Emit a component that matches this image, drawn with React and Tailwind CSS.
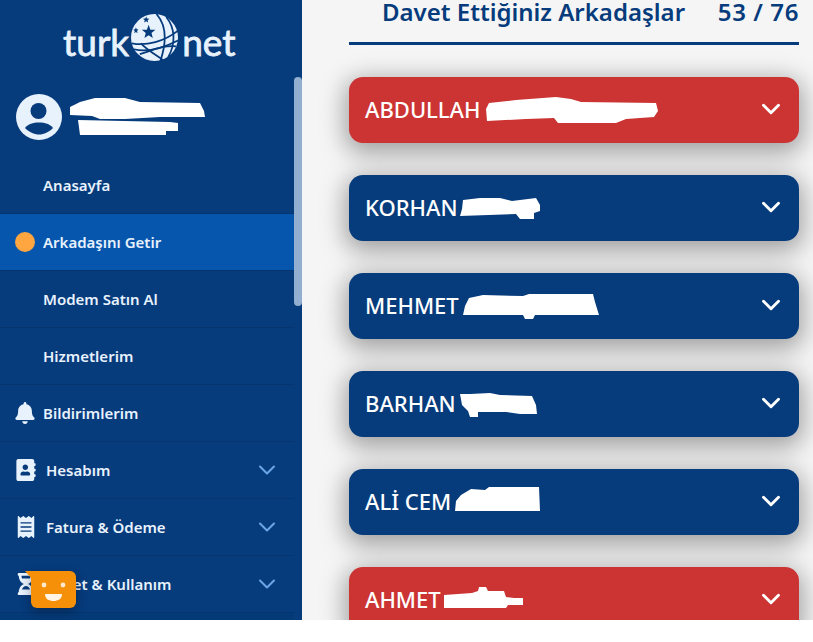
import { ChevronDown } from 'lucide-react'
import { FaBell, FaAddressBook, FaReceipt, FaHourglassHalf } from 'react-icons/fa'

const navRows = [
  { label: 'Anasayfa' },
  { label: 'Arkadaşını Getir', dot: true, active: true },
  { label: 'Modem Satın Al' },
  { label: 'Hizmetlerim' },
  { label: 'Bildirimlerim', icon: FaBell, iconClass: 'text-[22px] ml-[14px] w-[22px]', gap: 'ml-[7px]' },
  { label: 'Hesabım', icon: FaAddressBook, iconClass: 'text-[22px] ml-[16px] w-[20px]', gap: 'ml-[10px]', more: true },
  { label: 'Fatura & Ödeme', icon: FaReceipt, iconClass: 'text-[22px] ml-[17px] w-[18px]', gap: 'ml-[11px]', more: true },
  { label: 'Paket & Kullanım', icon: FaHourglassHalf, iconClass: 'text-[22px] ml-[17px] w-[18px]', gap: 'ml-[11px]', more: true }
]

const friends = [
  { name: 'ABDULLAH', red: true, blob: 'M3 6 L30 3 L70 0 L85 2 L95 5 L170 6 L172 14 L168 20 L140 22 L130 26 L72 26 L68 21 L40 22 L1 24 L0 12 Z', w: 172, h: 27, place: 'ml-[6px]' },
  { name: 'KORHAN', blob: 'M3 3 L20 1 L40 1 L52 4 L76 1 L80 8 L80 14 L74 16 L74 22 L60 22 L56 17 L0 19 L2 12 Z', w: 82, h: 23, place: 'ml-[2px]' },
  { name: 'MEHMET', blob: 'M6 4 L20 1 L60 2 L66 0 L130 0 L132 8 L136 21 L72 21 L70 25 L62 25 L60 21 L0 21 L2 12 Z', w: 137, h: 25, place: 'ml-[4px]' },
  { name: 'BARHAN', blob: 'M0 1 L10 1 L30 0 L40 2 L72 3 L76 12 L77 21 L60 21 L46 19 L18 19 L18 24 L10 24 L8 18 L2 12 Z', w: 77, h: 24, place: 'ml-[4px] mt-[2px]' },
  { name: 'ALİ CEM', blob: 'M6 8 L16 2 L30 3 L34 0 L84 0 L85 24 L0 24 L1 14 Z', w: 85, h: 24, place: 'ml-[4px] -mt-[6px]' },
  { name: 'AHMET', red: true, blob: 'M0 8 L28 6 L34 4 L35 0 L42 0 L44 4 L60 4 L62 10 L70 11 L79 11 L79 18 L64 18 L62 21 L0 21 Z', w: 79, h: 21, place: 'ml-[3px] -mt-[6px]' }
]

function GlobeLogo() {
  return (
    <svg viewBox="0 0 48 48" className="w-[47px] h-[47px] shrink-0">
      <circle cx="24" cy="24" r="24" fill="#e8f2fd" />
      <g fill="none" stroke="#063b7c" strokeWidth="1.8">
        <path d="M26 0 C35 10 38 24 30 48" />
        <path d="M36 3 C45 14 46 30 38 44" />
        <path d="M1 30 C16 33 34 28 48 17" />
        <path d="M3 36 C18 40 34 34 48 27" />
        <path d="M9 41 C22 37 32 32 46 33" />
        <path d="M10 30 C18 38 26 42 34 48" />
      </g>
      <path d="M18 11 L19.8 16 L25 16.2 L20.9 19.4 L22.3 24.5 L18 21.6 L13.7 24.5 L15.1 19.4 L11 16.2 L16.2 16 Z" fill="#063b7c" />
      <path d="M15.5 2.5 L16.4 4.6 L18.8 4.8 L17 6.3 L17.6 8.6 L15.5 7.4 L13.4 8.6 L14 6.3 L12.2 4.8 L14.6 4.6 Z" fill="#063b7c" />
      <path d="M5 13.5 L5.8 15.6 L7.6 15.8 L6.2 17.3 L6.7 19.6 L5 18.4 L3.3 19.6 L3.8 17.3 L2.4 15.8 L4.2 15.6 Z" fill="#063b7c" />
    </svg>
  )
}

function Avatar() {
  return (
    <svg viewBox="0 0 46 46" className="w-[46px] h-[46px] shrink-0">
      <circle cx="23" cy="23" r="23" fill="#e8f2fd" />
      <circle cx="22.5" cy="17" r="8" fill="#063b7c" />
      <path d="M9 34 C12 30 17 28.5 23 28.5 C29 28.5 34 30 37 34 C33 38 28 40.5 23 40.5 C18 40.5 13 38 9 34 Z" fill="#063b7c" />
    </svg>
  )
}

function NavRow({ row }) {
  const Icon = row.icon
  return (
    <div className={`h-[57px] shrink-0 flex items-center border-b border-[#05346e] ${row.active ? 'bg-[#0756ae]' : ''}`}>
      {row.dot && <span className="w-[20px] h-[20px] ml-[15px] rounded-full bg-[#ffa640]" />}
      {Icon && <Icon className={`${row.iconClass} text-[#e8f2fd]`} />}
      <span className={`text-[15px] font-semibold text-[#e8f2fd] ${row.dot ? 'ml-[8px]' : Icon ? row.gap : 'ml-[43px]'}`}>{row.label}</span>
      {row.more && <ChevronDown size={28} strokeWidth={1.8} className="ml-auto mr-[13px] text-[#6aa5e8]" />}
    </div>
  )
}

function FriendCard({ friend }) {
  return (
    <div className={`h-[66px] shrink-0 rounded-[14px] flex items-center pl-[16px] pr-[13px] shadow-[0_6px_24px_4px_rgba(0,0,0,0.35)] text-white ${friend.red ? 'bg-[#cc3333]' : 'bg-[#063b7c]'}`}>
      <span className="text-[22px] font-medium -mt-[2px]">{friend.name}</span>
      <svg width={friend.w} height={friend.h} viewBox={`0 0 ${friend.w} ${friend.h}`} className={friend.place}>
        <path d={friend.blob} fill="#ffffff" />
      </svg>
      <ChevronDown size={30} strokeWidth={2.3} className="ml-auto -mt-[2px]" />
    </div>
  )
}

export default function App() {
  return (
    <div className="relative w-[813px] h-[620px] flex overflow-hidden bg-[#f5f5f5] font-['Noto_Sans',sans-serif]">
      <aside className="relative z-10 w-[302px] shrink-0 flex bg-[#063b7c]">
        <div className="w-[294px] shrink-0 flex flex-col">
          <div className="h-[94px] shrink-0 flex items-center pl-[63px] pb-[25px] pt-[6px]">
            <span className="text-[37px] leading-none text-[#e8f2fd] font-['Lato',sans-serif] [-webkit-text-stroke:0.8px_#e8f2fd] mt-[8px]">turk</span>
            <span className="ml-[2px] mr-[4px]"><GlobeLogo /></span>
            <span className="text-[37px] leading-none text-[#e8f2fd] font-['Lato',sans-serif] [-webkit-text-stroke:0.8px_#e8f2fd] mt-[8px]">net</span>
          </div>
          <div className="h-[63px] shrink-0 flex items-start pl-[16px]">
            <Avatar />
            <svg width="136" height="39" viewBox="0 0 136 39" className="ml-[8px] mt-[3px]">
              <path d="M4 8 L10 5 L25 1 L55 1 L70 5 L130 6 L134 14 L135 20 L90 20 L55 22 L30 22 L22 19 L0 18 L0 10 Z" fill="#ffffff" />
              <path d="M8 23 L100 25 L108 26 L108 34 L96 34 L96 38 L10 38 Z" fill="#ffffff" />
            </svg>
          </div>
          {navRows.map(row => <NavRow key={row.label} row={row} />)}
          <div className="flex-1 bg-[#053a78]" />
        </div>
        <div className="w-[8px] shrink-0 pt-[77px]">
          <div className="h-[229px] rounded-[4px] bg-[#92aed0]" />
        </div>
      </aside>

      <main className="flex-1 min-w-0 pl-[47px] pr-[14px] flex flex-col">
        <div className="h-[42px] shrink-0 flex items-start justify-between pl-[33px]">
          <h1 className="text-[24px] leading-[24px] font-semibold text-[#063b7c]">Davet Ettiğiniz Arkadaşlar</h1>
          <span className="text-[24px] leading-[24px] font-semibold text-[#063b7c] tracking-[0.6px]">53 / 76</span>
        </div>
        <div className="h-[3px] shrink-0 bg-[#063b7c]" />
        <div className="flex flex-col gap-[32px] mt-[32px]">
          {friends.map(f => <FriendCard key={f.name} friend={f} />)}
        </div>
      </main>

      <div className="absolute z-20 left-[31px] top-[571px] w-[45px] h-[37px] rounded-b-[6px] rounded-tr-[6px] bg-[#f79009] shadow-[0_4px_12px_rgba(0,0,0,0.3)]">
        <svg width="45" height="37" viewBox="0 0 45 37" className="overflow-visible">
          <path d="M1 0 L-6 0 L1 8 Z" fill="#f79009" />
          <circle cx="13" cy="14" r="2.4" fill="#ffe9cc" />
          <circle cx="32" cy="14" r="2.4" fill="#ffe9cc" />
          <path d="M14 23 L31 23 C31 28 27 30 22.5 30 C18 30 14 28 14 23 Z" fill="#fff4e6" />
        </svg>
      </div>
    </div>
  )
}
